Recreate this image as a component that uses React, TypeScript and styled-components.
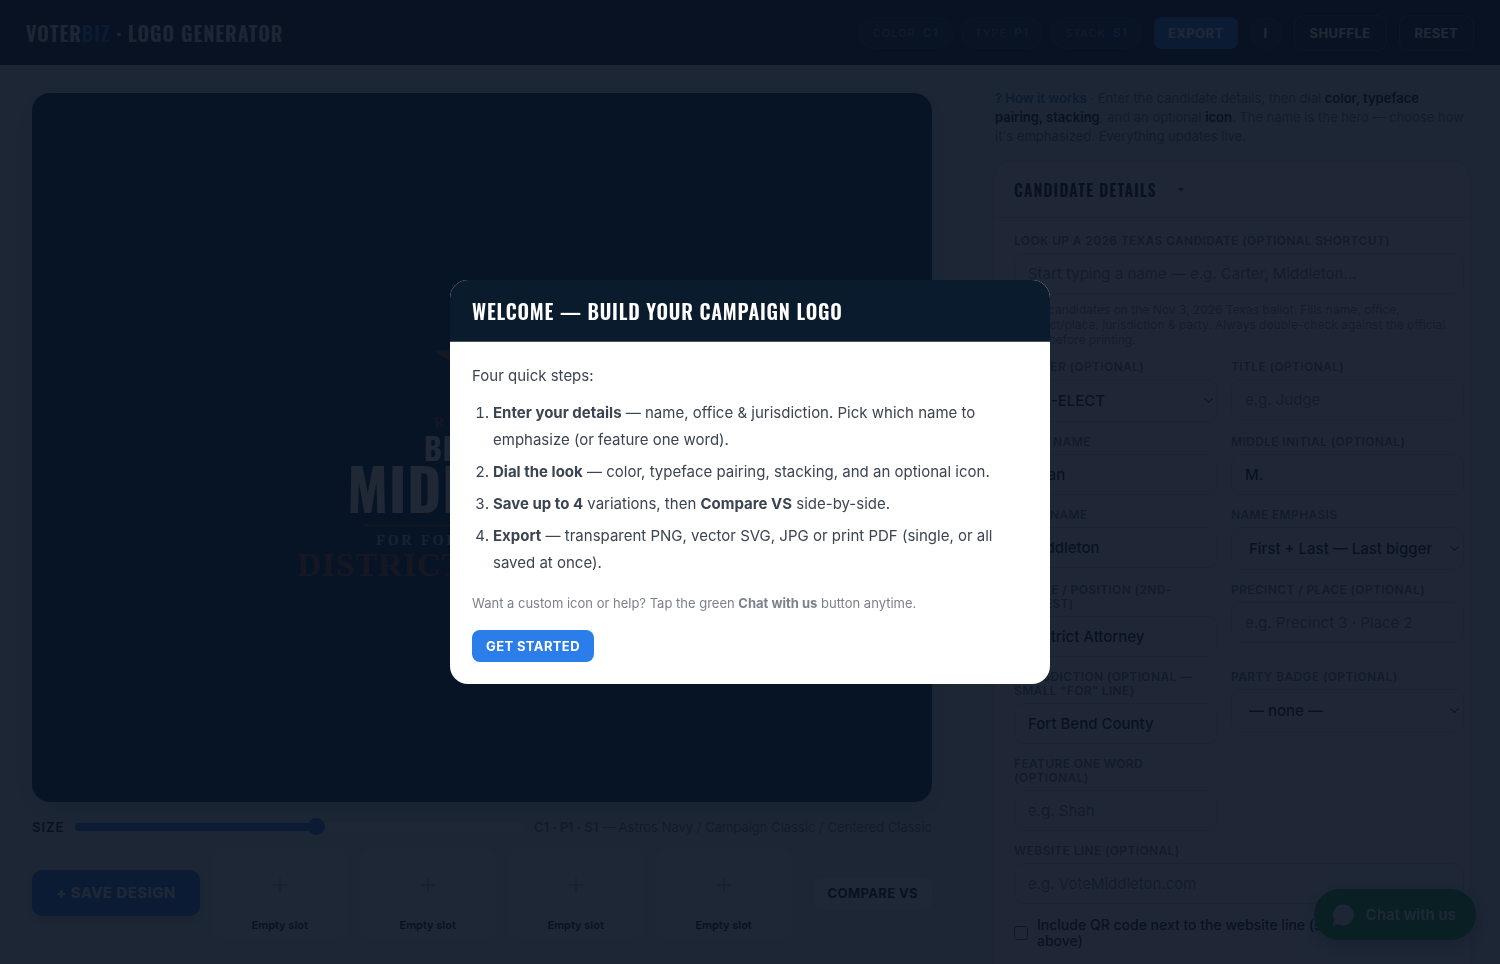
import React from 'react';
import styled, { createGlobalStyle, css } from 'styled-components';
import { ChevronDown } from 'lucide-react';

const sans = `Inter, "Liberation Sans", sans-serif`;
const display = `Oswald, "Liberation Sans Narrow", "Liberation Sans", sans-serif`;
const navy = '#0b1b2e';
const blue = '#2b7de9';
const ink = '#0b1b2e';

const Global = createGlobalStyle`
  *, *::before, *::after { box-sizing: border-box; }
  body { margin: 0; overflow: hidden; font-family: ${sans}; color: ${ink}; background: #dfe8ee; }
  button, input, select { font-family: inherit; }
`;

const Shell = styled.div`
  display: flex;
  flex-direction: column;
  height: 100vh;
`;

const TopBar = styled.header`
  display: flex;
  flex: none;
  align-items: center;
  justify-content: space-between;
  height: 65px;
  padding: 0 26px;
  background: #14203a;
`;

const Brand = styled.h1`
  margin: 0;
  font: 600 20px/28px ${display};
  letter-spacing: 1px;
  color: #e3e8f0;
  span { color: ${blue}; }
`;

const Actions = styled.div`
  display: flex;
  align-items: center;
  gap: 12px;
`;

const Pills = styled.div`
  display: flex;
  gap: 8px;
`;

const Pill = styled.span`
  display: flex;
  align-items: center;
  gap: 7px;
  height: 32px;
  padding: 0 13px;
  border: 1px solid #2f4258;
  border-radius: 16px;
  background: #1b2f40;
  font-size: 11px;
  letter-spacing: 1px;
  color: #6c7f92;
  b { color: ${blue}; font-size: 12px; }
`;

const Button = styled.button<{ $kind?: 'primary' | 'outline' | 'plain' | 'round'; $large?: boolean }>`
  height: 32px;
  padding: 0 14px;
  border: 0;
  border-radius: 8px;
  font-size: 13px;
  font-weight: 700;
  line-height: 16px;
  letter-spacing: 0.03em;
  white-space: nowrap;
  color: #fff;
  background: ${blue};
  ${p => p.$kind === 'outline' && css`
    height: 36px;
    padding: 0 15px;
    background: transparent;
    border: 1px solid #3a4a68;
    border-radius: 10px;
  `}
  ${p => p.$kind === 'plain' && css`
    background: #f4f7fc;
    color: ${ink};
  `}
  ${p => p.$kind === 'round' && css`
    width: 32px;
    padding: 0;
    border-radius: 50%;
    border: 1px solid #2f4258;
    background: #1b2f40;
  `}
  ${p => p.$large && css`
    height: 46px;
    padding: 0 24px;
    border-radius: 10px;
    font-size: 15px;
    box-shadow: 0 4px 12px rgba(20, 60, 140, 0.2);
  `}
`;

const Workspace = styled.div`
  display: grid;
  grid-template-columns: minmax(0, 1fr) 536px;
  flex: 1;
  min-height: 0;
`;

const Main = styled.main`
  display: flex;
  flex-direction: column;
  min-height: 0;
  padding: 28px 32px 26px;
`;

const Stage = styled.section`
  flex: 1;
  min-height: 0;
  border-radius: 18px;
  background: #05385a;
  box-shadow: 0 8px 28px rgba(10, 30, 60, 0.15);
  svg { display: block; width: 100%; height: 100%; }
`;

const SizeRow = styled.div`
  display: flex;
  align-items: center;
  gap: 11px;
  height: 46px;
  padding-top: 4px;
  font-size: 13px;
  color: #6a7896;
`;

const SizeLabel = styled.label`
  font-weight: 600;
  letter-spacing: 1px;
  color: ${ink};
`;

const Slider = styled.input`
  flex: 1;
  min-width: 0;
  height: 18px;
  margin: 0;
  appearance: none;
  background: transparent;
  &::-webkit-slider-runnable-track {
    height: 8px;
    border-radius: 4px;
    background: linear-gradient(90deg, ${blue} 54%, #eceff8 54%);
  }
  &::-webkit-slider-thumb {
    appearance: none;
    width: 17px;
    height: 17px;
    margin-top: -5px;
    border-radius: 50%;
    background: ${blue};
  }
`;

const Code = styled.span`
  white-space: nowrap;
  b { font-weight: 600; }
`;

const SaveRow = styled.div`
  display: flex;
  align-items: center;
  gap: 12px;
`;

const Slots = styled.div`
  display: grid;
  flex: 1;
  grid-template-columns: repeat(4, 1fr);
  gap: 12px;
  margin-right: 10px;
`;

const Slot = styled.button`
  display: flex;
  flex-direction: column;
  align-items: center;
  justify-content: flex-end;
  gap: 20px;
  height: 90px;
  padding: 0 0 6px;
  border: 0;
  border-radius: 10px;
  background: #eaf1f8;
  font-size: 11px;
  font-weight: 600;
  line-height: 14px;
  color: ${ink};
  svg { color: #8a96aa; }
`;

const Side = styled.aside`
  overflow: hidden;
  padding: 24px 31px;
`;

const Intro = styled.p`
  margin: 0 0 16px;
  font-size: 13px;
  line-height: 19px;
  color: #6a789c;
  b { color: ${ink}; font-weight: 600; }
  a { color: ${blue}; font-weight: 600; text-decoration: none; }
`;

const Panel = styled.section`
  border-radius: 16px;
  background: #eef5fa;
  box-shadow: 0 2px 10px rgba(20, 40, 70, 0.12);
`;

const PanelHead = styled.header`
  display: flex;
  align-items: center;
  gap: 20px;
  height: 56px;
  padding: 0 19px;
  border-bottom: 1px solid #cfd8e4;
`;

const PanelTitle = styled.h2`
  margin: 0;
  font: 600 16px/24px ${display};
  letter-spacing: 1px;
`;

const Fields = styled.form`
  display: grid;
  grid-template-columns: 204fr 233fr;
  gap: 13px;
  padding: 16px 5px 40px 19px;
`;

const FieldBox = styled.div<{ $wide?: boolean }>`
  display: flex;
  flex-direction: column;
  gap: 5px;
  min-width: 0;
  grid-column: ${p => (p.$wide ? '1 / -1' : 'auto')};
`;

const FieldLabel = styled.label`
  font-size: 12px;
  font-weight: 600;
  line-height: 14px;
  letter-spacing: 0.03em;
  text-transform: uppercase;
  color: #6b788e;
`;

const control = css`
  width: 100%;
  border: 1px solid #ccd5e2;
  border-radius: 10px;
  background: #eef5fa;
  font-size: 15px;
  font-weight: 500;
  color: ${ink};
`;

const TextInput = styled.input`
  ${control}
  height: 41px;
  padding: 0 13px;
  &::placeholder { color: #727f96; opacity: 1; font-weight: 400; }
`;

const SelectWrap = styled.div`
  position: relative;
  svg { position: absolute; right: 2px; top: 14px; color: #3a475c; pointer-events: none; }
`;

const Select = styled.select`
  ${control}
  height: 43px;
  padding: 0 17px;
  appearance: none;
`;

const Hint = styled.p`
  margin: 3px 0 0;
  font-size: 12px;
  line-height: 15px;
  color: #7c889c;
`;

const CheckLine = styled.label`
  display: flex;
  grid-column: 1 / -1;
  align-items: center;
  gap: 9px;
  font-size: 14px;
  font-weight: 500;
  line-height: 16px;
`;

const Checkbox = styled.input`
  flex: none;
  width: 14px;
  height: 14px;
  margin: 0;
  border: 1px solid #3c4a60;
  border-radius: 3px;
  appearance: none;
`;

const Chat = styled.button`
  position: fixed;
  right: 24px;
  bottom: 24px;
  display: flex;
  align-items: center;
  gap: 11px;
  height: 51px;
  padding: 0 20px 0 17px;
  border: 0;
  border-radius: 26px;
  background: #16a34a;
  box-shadow: 0 6px 20px rgba(0, 40, 20, 0.35);
  font-size: 15px;
  font-weight: 600;
  color: #fff;
`;

const Backdrop = styled.div`
  position: fixed;
  inset: 0;
  display: flex;
  align-items: center;
  justify-content: center;
  padding: 20px;
  background: rgba(8, 17, 32, 0.9);
`;

const Dialog = styled.section`
  width: 100%;
  max-width: 600px;
  overflow: hidden;
  border-radius: 18px;
  background: #fff;
`;

const DialogHead = styled.header`
  padding: 18px 22px 16px;
  background: ${navy};
  border-bottom: 1px solid #48535f;
`;

const DialogTitle = styled.h2`
  margin: 0;
  font: 600 20px/27px ${display};
  letter-spacing: 0.04em;
  color: #fff;
`;

const DialogBody = styled.div`
  padding: 20px 22px 22px;
  font-size: 15px;
  line-height: 27px;
  color: #3b4452;
  p { margin: 0 0 10px; }
`;

const Steps = styled.ol`
  margin: 0 0 16px;
  padding-left: 21px;
  li { margin-bottom: 5px; }
`;

const Note = styled.small`
  display: block;
  margin-bottom: 16px;
  font-size: 13px;
  line-height: 22px;
  color: #7b828c;
`;

type FieldProps = {
  id: string;
  label: string;
  value?: string;
  placeholder?: string;
  wide?: boolean;
  hint?: string;
  options?: string[];
};

function Field({ id, label, value, placeholder, wide, hint, options }: FieldProps) {
  return (
    <FieldBox $wide={wide}>
      <FieldLabel htmlFor={id}>{label}</FieldLabel>
      {options ? (
        <SelectWrap>
          <Select id={id}>
            {options.map(o => <option key={o}>{o}</option>)}
          </Select>
          <ChevronDown size={15} strokeWidth={2} />
        </SelectWrap>
      ) : (
        <TextInput id={id} defaultValue={value} placeholder={placeholder} />
      )}
      {hint && <Hint>{hint}</Hint>}
    </FieldBox>
  );
}

function CampaignLogo() {
  const serif = '"Liberation Serif", serif';
  return (
    <svg viewBox="0 0 900 710" role="img" aria-label="Campaign logo preview">
      <polygon
        fill="#eb6e1f"
        opacity=".6"
        points="450,224 461,258 497,258 468,279 479,313 450,292 421,313 432,279 403,258 439,258"
      />
      <g fontFamily={serif} fontWeight="700" fill="#eb6e1f" opacity=".6">
        <text x="402" y="334" fontSize="14" letterSpacing="6">RE-ELECT</text>
        <text x="265" y="484" fontSize="33" letterSpacing="1">DISTRICT ATTORNEY</text>
      </g>
      <g fontFamily={display} fontWeight="700" fill="#fff">
        <text x="392" y="369" fontSize="30" letterSpacing="1">BRIAN M.</text>
        <text x="315" y="421" fontSize="58" letterSpacing="1">MIDDLETON</text>
      </g>
      <rect x="331" y="432" width="238" height="2" fill="#eb6e1f" opacity=".5" />
      <text x="344" y="453" fontFamily={serif} fontSize="14" fontWeight="700" letterSpacing="3" fill="#fff" opacity=".7">
        FOR FORT BEND COUNTY
      </text>
    </svg>
  );
}

export default function App() {
  return (
    <>
      <Global />
      <Shell>
        <TopBar>
          <Brand>VOTER<span>BIZ</span> · LOGO GENERATOR</Brand>
          <Actions>
            <Pills>
              <Pill>COLOR <b>C1</b></Pill>
              <Pill>TYPE <b>P1</b></Pill>
              <Pill>STACK <b>S1</b></Pill>
            </Pills>
            <Button>EXPORT</Button>
            <Button $kind="round" aria-label="Information">I</Button>
            <Button $kind="outline">SHUFFLE</Button>
            <Button $kind="outline">RESET</Button>
          </Actions>
        </TopBar>
        <Workspace>
          <Main>
            <Stage><CampaignLogo /></Stage>
            <SizeRow>
              <SizeLabel htmlFor="size">SIZE</SizeLabel>
              <Slider id="size" type="range" min={0} max={100} defaultValue={54} />
              <Code><b>C1 · P1 · S1</b> — Astros Navy / Campaign Classic / Centered Classic</Code>
            </SizeRow>
            <SaveRow>
              <Button $large>+ SAVE DESIGN</Button>
              <Slots>
                {[1, 2, 3, 4].map(n => (
                  <Slot key={n}>
                    <svg width="14" height="26" viewBox="0 0 14 26" stroke="currentColor" fill="none">
                      <path d="M7 6v14M0 13h14" />
                    </svg>
                    Empty slot
                  </Slot>
                ))}
              </Slots>
              <Button $kind="plain">COMPARE VS</Button>
            </SaveRow>
          </Main>
          <Side>
            <Intro>
              <a href="#how">? How it works</a> · Enter the candidate details, then dial <b>color, typeface
              pairing, stacking</b>, and an optional <b>icon</b>. The name is the hero — choose how
              it's emphasized. Everything updates live.
            </Intro>
            <Panel>
              <PanelHead>
                <PanelTitle>CANDIDATE DETAILS</PanelTitle>
                <svg width="8" height="6" viewBox="0 0 8 6"><path d="M1 1h6L4 5z" fill="#44526a" /></svg>
              </PanelHead>
              <Fields>
                <Field
                  id="lookup"
                  wide
                  label="Look up a 2026 Texas candidate (optional shortcut)"
                  placeholder="Start typing a name — e.g. Carter, Middleton…"
                  hint="Local candidates on the Nov 3, 2026 Texas ballot. Fills name, office, precinct/place, jurisdiction & party. Always double-check against the official ballot before printing."
                />
                <Field id="banner" label="Banner (optional)" options={['RE-ELECT']} />
                <Field id="title" label="Title (optional)" placeholder="e.g. Judge" />
                <Field id="first" label="First name" value="Brian" />
                <Field id="middle" label="Middle initial (optional)" value="M." />
                <Field id="last" label="Last name" value="Middleton" />
                <Field id="emphasis" label="Name emphasis" options={['First + Last — Last bigger']} />
                <Field id="office" label="Office / position (2nd-biggest)" value="District Attorney" />
                <Field id="precinct" label="Precinct / place (optional)" placeholder="e.g. Precinct 3 · Place 2" />
                <Field id="jurisdiction" label="Jurisdiction (optional — small “for” line)" value="Fort Bend County" />
                <Field id="party" label="Party badge (optional)" options={['— none —']} />
                <Field id="feature" label="Feature one word (optional)" placeholder="e.g. Shah" />
                <Field id="website" wide label="Website line (optional)" placeholder="e.g. VoteMiddleton.com" />
                <CheckLine>
                  <Checkbox type="checkbox" />
                  Include QR code next to the website line (set the website above)
                </CheckLine>
              </Fields>
            </Panel>
          </Side>
        </Workspace>
      </Shell>
      <Chat>
        <svg width="24" height="24" viewBox="0 0 24 24" fill="#dfe3f2">
          <path d="M12.500 1.500a10.500 10.500 0 1 1-4.700 19.900L1.500 23l1.700-6.100A10.500 10.500 0 0 1 12.500 1.500z" />
        </svg>
        Chat with us
      </Chat>
      <Backdrop>
        <Dialog role="dialog" aria-modal="true" aria-labelledby="welcome">
          <DialogHead><DialogTitle id="welcome">WELCOME — BUILD YOUR CAMPAIGN LOGO</DialogTitle></DialogHead>
          <DialogBody>
            <p>Four quick steps:</p>
            <Steps>
              <li><b>Enter your details</b> — name, office &amp; jurisdiction. Pick which name to emphasize (or feature one word).</li>
              <li><b>Dial the look</b> — color, typeface pairing, stacking, and an optional icon.</li>
              <li><b>Save up to 4</b> variations, then <b>Compare VS</b> side-by-side.</li>
              <li><b>Export</b> — transparent PNG, vector SVG, JPG or print PDF (single, or all saved at once).</li>
            </Steps>
            <Note>Want a custom icon or help? Tap the green <b>Chat with us</b> button anytime.</Note>
            <Button>GET STARTED</Button>
          </DialogBody>
        </Dialog>
      </Backdrop>
    </>
  );
}
